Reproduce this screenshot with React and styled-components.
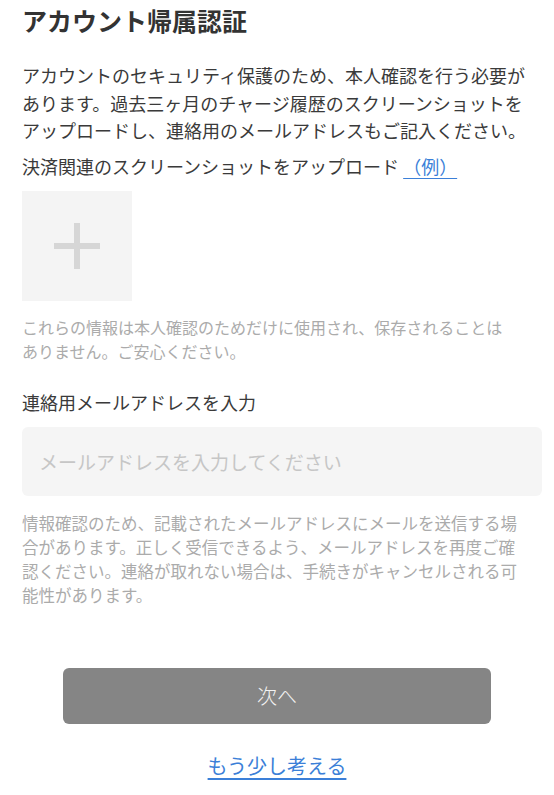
import React from "react";
import styled, { createGlobalStyle } from "styled-components";

const GlobalStyle = createGlobalStyle`
  html, body {
    margin: 0;
    padding: 0;
    background: #ffffff;
  }
  body {
    font-family: "Noto Sans CJK JP", "Noto Sans", sans-serif;
    color: #333;
  }
`;

const Page = styled.main`
  padding: 2px 12px 0 22px;
  display: flex;
  flex-direction: column;
`;

const Title = styled.h1`
  margin: 0;
  font-size: 25px;
  line-height: 36px;
  font-weight: 700;
  color: #333;
`;

const Lead = styled.p`
  margin: 24px 10px 0 0;
  font-size: 18px;
  line-height: 27.5px;
  color: #3a3a3a;
`;

const Label = styled.p`
  margin: ${(p) => p.$top || 0}px 10px 0 0;
  font-size: 18px;
  line-height: 27.5px;
  color: #3a3a3a;
`;

const ExampleLink = styled.a`
  color: #3b7fd8;
  text-decoration: underline;
  text-underline-offset: 4px;
  cursor: pointer;
`;

const UploadBox = styled.button`
  margin-top: 11px;
  width: 110px;
  height: 110px;
  border: none;
  padding: 0;
  background: #f4f4f4;
  display: flex;
  align-items: center;
  justify-content: center;
  cursor: pointer;
`;

const Note = styled.p`
  margin: ${(p) => p.$top}px 20px 0 0;
  font-size: ${(p) => p.$size}px;
  line-height: ${(p) => p.$lh}px;
  color: #ababab;
`;

const Input = styled.input`
  margin-top: 10px;
  height: 69px;
  box-sizing: border-box;
  border: none;
  border-radius: 6px;
  background: #f5f5f5;
  padding: 0 17px;
  font-family: inherit;
  font-size: 19px;
  color: #333;
  outline: none;
  &::placeholder {
    color: #c6c6c6;
  }
`;

const Actions = styled.div`
  margin: 60px 10px 0 0;
  display: flex;
  flex-direction: column;
  align-items: center;
`;

const NextButton = styled.button`
  width: 428px;
  height: 56px;
  border: none;
  border-radius: 6px;
  background: #858585;
  color: #f2f2f2;
  font-family: inherit;
  font-size: 20px;
  font-weight: 300;
  cursor: pointer;
`;

const LaterLink = styled.a`
  margin-top: 27px;
  font-size: 20px;
  line-height: 30px;
  color: #3b7fd8;
  text-decoration: underline;
  text-underline-offset: 4px;
  cursor: pointer;
`;

const PlusIcon = () => (
  <svg width="46" height="46" viewBox="0 0 46 46">
    <rect x="0" y="20" width="46" height="6" fill="#d6d6d6" />
    <rect x="20" y="0" width="6" height="46" fill="#d6d6d6" />
  </svg>
);

export default function App() {
  return (
    <>
      <GlobalStyle />
      <Page>
        <Title>アカウント帰属認証</Title>
        <Lead>
          アカウントのセキュリティ保護のため、本人確認を行う必要があります。過去三ヶ月のチャージ履歴のスクリーンショットをアップロードし、連絡用のメールアドレスもご記入ください。
        </Lead>
        <Label $top={8}>
          決済関連のスクリーンショットをアップロード{" "}
          <ExampleLink>（例）</ExampleLink>
        </Label>
        <UploadBox aria-label="upload">
          <PlusIcon />
        </UploadBox>
        <Note $top={14} $size={16} $lh={24}>
          これらの情報は本人確認のためだけに使用され、保存されることは
          <br />
          ありません。ご安心ください。
        </Note>
        <Label $top={26}>連絡用メールアドレスを入力</Label>
        <Input placeholder="メールアドレスを入力してください" />
        <Note $top={15} $size={16.5} $lh={24.3}>
          情報確認のため、記載されたメールアドレスにメールを送信する場合があります。正しく受信できるよう、メールアドレスを再度ご確認ください。連絡が取れない場合は、手続きがキャンセルされる可能性があります。
        </Note>
        <Actions>
          <NextButton>次へ</NextButton>
          <LaterLink>もう少し考える</LaterLink>
        </Actions>
      </Page>
    </>
  );
}
